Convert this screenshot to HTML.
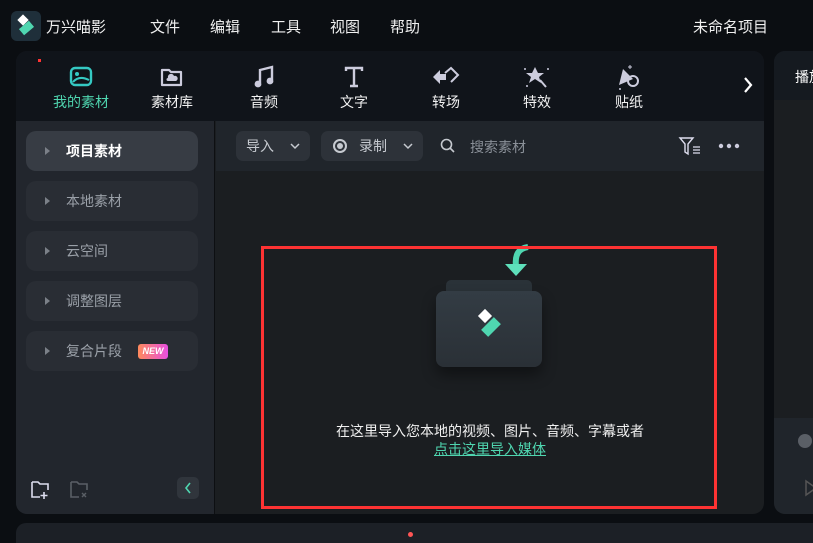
<!DOCTYPE html>
<html style="width:813px;height:543px;overflow:hidden"><head><meta charset="utf-8"><style>
*{margin:0;padding:0;box-sizing:border-box}
body{width:813px;height:543px;background:#0b0e12;font-family:"Liberation Sans","Noto Sans CJK SC",sans-serif;color:#e8eaed;position:relative;overflow:hidden;font-size:14px}
.abs{position:absolute}
.menu span{position:absolute;top:16px;font-size:15px;color:#f0f0f0}
.main{left:16px;top:51px;width:748px;height:463px;border-radius:11px;background:#1b1e21;overflow:hidden}
.tabs{left:0;top:0;width:748px;height:70px;background:#10141a}
.tab{position:absolute;top:12px;width:80px;text-align:center;font-size:14px;color:#f2f2f2}
.tab .ic{height:28px;display:flex;justify-content:center;align-items:center}
.tab .lb{margin-top:1px}
.side{left:0;top:70px;width:199px;height:393px;background:#22262d;border-right:1px solid #0d0f12}
.item{position:absolute;left:10px;width:172px;height:40px;border-radius:10px;background:#292d34;color:#9aa0a8;font-size:14px;line-height:40px;padding-left:40px}
.item:before{content:"";position:absolute;left:19px;top:16px;border-left:5px solid #7b8088;border-top:4px solid transparent;border-bottom:4px solid transparent}
.bar{left:200px;top:70px;width:548px;height:50px;background:#20252b}
.btn{position:absolute;top:10px;height:30px;border-radius:7px;background:#2d3239;color:#c6cad0;font-size:14px;line-height:30px}
.dd{position:absolute;right:10px;top:11px}
</style></head><body>
<div class="abs" style="left:11px;top:11px;width:30px;height:30px;border-radius:6px;background:#1f2f3a"></div>
<div class="abs" style="left:19px;top:16px;width:8px;height:8px;background:#fff;transform:rotate(45deg)"></div>
<div class="abs" style="left:20px;top:24px;width:13px;height:8px;background:#4fd6b0;transform:rotate(-40deg)"></div>
<div class="menu">
<span style="left:46px">万兴喵影</span>
<span style="left:150px">文件</span>
<span style="left:210px">编辑</span>
<span style="left:271px">工具</span>
<span style="left:330px">视图</span>
<span style="left:390px">帮助</span>
<span style="left:693px">未命名项目</span>
</div>
<div class="abs main">
 <div class="abs tabs">
  <div class="abs" style="left:22px;top:8px;width:3px;height:3px;background:#f33"></div>
  <div class="tab" style="left:25px;color:#4fd6b0"><div class="ic"><svg width="24" height="22"><rect x="2" y="2" width="20" height="17" rx="4" fill="none" stroke="#35c9c3" stroke-width="2.4"/><circle cx="8" cy="8" r="2" fill="#35c9c3"/><path d="M4 16 Q10 9 20 14" stroke="#35c9c3" stroke-width="2" fill="none"/></svg></div><div class="lb">我的素材</div></div>
  <div class="tab" style="left:116px"><div class="ic"><svg width="24" height="22"><path d="M2 4 h7 l2 2 h10 v13 h-19z" fill="none" stroke="#ccd" stroke-width="2.2" stroke-linejoin="round"/><path d="M8 15 h8 a2.5 2.5 0 0 0 -2 -5 a3 3 0 0 0 -6 2 a1.5 1.5 0 0 0 0 3z" fill="#ccd"/></svg></div><div class="lb">素材库</div></div>
  <div class="tab" style="left:208px"><div class="ic"><svg width="22" height="24"><path d="M7 18 V5 L19 2 V15" stroke="#ccd" stroke-width="2.4" fill="none"/><circle cx="5" cy="19" r="3.4" fill="#ccd"/><circle cx="17" cy="16" r="3.4" fill="#ccd"/></svg></div><div class="lb">音频</div></div>
  <div class="tab" style="left:298px"><div class="ic"><svg width="22" height="24"><path d="M3 6 V3 H19 V6 M11 3 V21 M7 21 H15" stroke="#ccd" stroke-width="2.4" fill="none"/></svg></div><div class="lb">文字</div></div>
  <div class="tab" style="left:390px"><div class="ic"><svg width="30" height="24"><path d="M2 12 L9 5 V9 H15 V15 H9 V19Z" fill="#ccd"/><path d="M14 8 L20 3 L27 10 L20 17" stroke="#ccd" stroke-width="2" fill="none"/></svg></div><div class="lb">转场</div></div>
  <div class="tab" style="left:481px"><div class="ic"><svg width="28" height="26"><path d="M12 3 L15 9 L21 9 L16 13 L18 19 L12 15 L6 19 L8 13 L3 9 L9 9Z" fill="#ccd"/><path d="M17 16 L23 23" stroke="#ccd" stroke-width="2"/><circle cx="2" cy="5" r="1" fill="#ccd"/><circle cx="25" cy="5" r="1" fill="#ccd"/><circle cx="4" cy="22" r="1" fill="#ccd"/></svg></div><div class="lb">特效</div></div>
  <div class="tab" style="left:573px"><div class="ic"><svg width="28" height="28"><path d="M4 22 L8 6 L18 16Z" fill="#ccd"/><circle cx="18" cy="18" r="5" stroke="#ccd" stroke-width="2" fill="none"/><path d="M15 2 v4 M13 4 h4" stroke="#ccd" stroke-width="1"/><circle cx="5" cy="26" r="1" fill="#ccd"/></svg></div><div class="lb">贴纸</div></div>
  <svg class="abs" style="left:727px;top:25px" width="10" height="18"><path d="M2 2 L8 9 L2 16" stroke="#fff" stroke-width="2.2" fill="none"/></svg>
 </div>
 <div class="abs side">
  <div class="item" style="top:10px;background:#373c44;color:#fff;font-weight:bold">项目素材</div>
  <div class="item" style="top:60px">本地素材</div>
  <div class="item" style="top:110px">云空间</div>
  <div class="item" style="top:160px">调整图层</div>
  <div class="item" style="top:210px">复合片段<span style="position:absolute;left:112px;top:13px;width:30px;height:15px;border-radius:3px;background:linear-gradient(90deg,#ff8a5c,#e84fe0);color:#fff;font-size:9px;line-height:15px;text-align:center;font-weight:bold;font-style:italic">NEW</span></div>
  <svg class="abs" style="left:13px;top:358px" width="22" height="22"><path d="M3 3 h6 l2 2 h8 v6 M11 18 h-8 v-15" stroke="#dde" stroke-width="1.6" fill="none"/><path d="M15 13 v7 M11.5 16.5 h7" stroke="#dde" stroke-width="1.6"/></svg>
  <svg class="abs" style="left:52px;top:358px" width="22" height="22"><path d="M3 3 h6 l2 2 h8 v6 M11 18 h-8 v-15" stroke="#5a5f66" stroke-width="1.6" fill="none"/><path d="M14 14 l4 4 M18 14 l-4 4" stroke="#5a5f66" stroke-width="1.4"/></svg>
  <div class="abs" style="left:161px;top:356px;width:22px;height:22px;border-radius:5px;background:#30353c"><svg width="22" height="22"><path d="M13 6 L9 11 L13 16" stroke="#4fd6b0" stroke-width="1.6" fill="none"/></svg></div>
 </div>
 <div class="abs bar">
  <div class="btn" style="left:20px;width:74px;padding-left:10px">导入<svg class="dd" width="10" height="8"><path d="M1 2 L5 6 L9 2" stroke="#c6cad0" stroke-width="1.5" fill="none"/></svg></div>
  <div class="btn" style="left:105px;width:102px;padding-left:38px"><span style="position:absolute;left:12px;top:8px;width:14px;height:14px;border-radius:50%;border:2px solid #c6cad0"></span><span style="position:absolute;left:16px;top:12px;width:6px;height:6px;border-radius:50%;background:#c6cad0"></span>录制<svg class="dd" width="10" height="8"><path d="M1 2 L5 6 L9 2" stroke="#c6cad0" stroke-width="1.5" fill="none"/></svg></div>
  <svg class="abs" style="left:224px;top:17px" width="16" height="16"><circle cx="6.5" cy="6.5" r="5" stroke="#c6cad0" stroke-width="1.6" fill="none"/><path d="M10 10 l4 4" stroke="#c6cad0" stroke-width="1.6"/></svg>
  <div class="abs" style="left:254px;top:16px;color:#8a9098;font-size:14px">搜索素材</div>
  <svg class="abs" style="left:462px;top:15px" width="26" height="20"><path d="M2 2 h13 l-5 6 v10 l-3 -2 v-8z" stroke="#dde" stroke-width="1.4" fill="none"/><path d="M15 11 h7 M15 14 h7 M15 17 h7" stroke="#dde" stroke-width="1.3"/></svg>
  <svg class="abs" style="left:502px;top:22px" width="22" height="6"><circle cx="3" cy="3" r="2.2" fill="#ccd"/><circle cx="11" cy="3" r="2.2" fill="#ccd"/><circle cx="19" cy="3" r="2.2" fill="#ccd"/></svg>
 </div>
 <div class="abs" style="left:430px;top:229px;width:86px;height:30px;border-radius:5px;background:#2a3238"></div>
 <div class="abs" style="left:420px;top:240px;width:106px;height:76px;border-radius:8px;background:linear-gradient(#333c44,#2a3036);box-shadow:0 8px 14px rgba(0,0,0,.4)"></div>
 <div class="abs" style="left:464px;top:260px;width:10px;height:10px;background:#fff;transform:rotate(45deg)"></div>
 <div class="abs" style="left:466px;top:271px;width:18px;height:10px;background:#4fd6b0;transform:rotate(-45deg)"></div>
 <svg class="abs" style="left:480px;top:193px" width="40" height="40"><path d="M32 3 Q18 5 20 22" stroke="#4fd6b0" stroke-width="6" fill="none"/><path d="M9 20 h22 l-11 12z" fill="#5ee0bb"/></svg>
 <div class="abs" style="left:0;top:370px;width:748px;text-align:center;font-size:14px;color:#f0f0f0;padding-left:200px">在这里导入您本地的视频、图片、音频、字幕或者</div>
 <div class="abs" style="left:0;top:388px;width:748px;text-align:center;font-size:14px;color:#4fd6b0;text-decoration:underline;padding-left:200px">点击这里导入媒体</div>
 <div class="abs" style="left:245px;top:195px;width:456px;height:263px;border:3px solid #fe3333"></div>
</div>
<div class="abs" style="left:774px;top:51px;width:50px;height:463px;border-radius:11px;background:#1b1e21;overflow:hidden">
 <div class="abs" style="left:0;top:0;width:50px;height:49px;background:#151a20"></div>
 <div class="abs" style="left:21px;top:16px;font-size:14px;color:#fff">播放</div>
 <div class="abs" style="left:0;top:367px;width:50px;height:96px;background:#20252b"></div>
 <div class="abs" style="left:24px;top:383px;width:14px;height:14px;border-radius:50%;background:#5a5f66"></div>
 <svg class="abs" style="left:30px;top:428px" width="14" height="18"><path d="M2 2 L12 9 L2 16Z" stroke="#555" stroke-width="1.5" fill="none"/></svg>
</div>
<div class="abs" style="left:16px;top:523px;width:810px;height:40px;border-radius:10px;background:#1c2026"></div>
<div class="abs" style="left:408px;top:532px;width:5px;height:5px;border-radius:50%;background:#f55"></div>
</body></html>
